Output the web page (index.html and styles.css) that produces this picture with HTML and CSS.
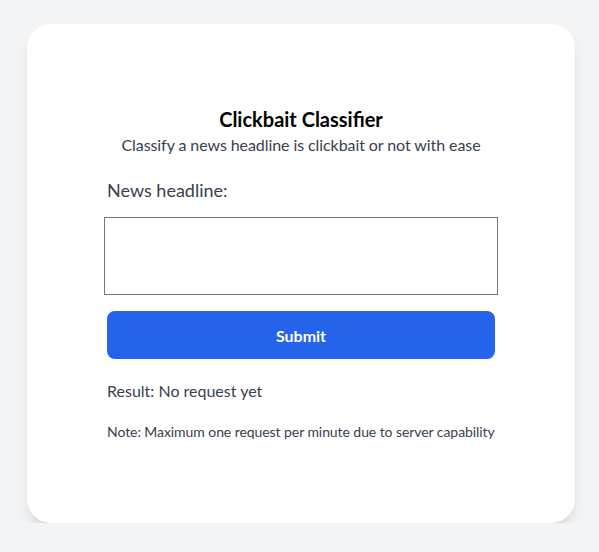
FILE: index.html
```html
<!DOCTYPE html>
<html>
<head>
<meta charset="utf-8">
<link rel="stylesheet" href="styles.css">
</head>
<body>
<main class="card">
  <h1 class="title">Clickbait Classifier</h1>
  <p class="subtitle">Classify a news headline is clickbait or not with ease</p>
  <label class="label" for="headline">News headline:</label>
  <textarea id="headline" class="input"></textarea>
  <button class="submit" type="button">Submit</button>
  <p class="result">Result: No request yet</p>
  <p class="note">Note: Maximum one request per minute due to server capability</p>
</main>
</body>
</html>
```

FILE: styles.css
```css
* { box-sizing: border-box; }
html, body { margin: 0; padding: 0; }
body {
  background: #f3f4f6;
  font-family: Lato, "Noto Sans", sans-serif;
  color: #374151;
  padding: 24px 24px 0 27px;
}
.card {
  width: 548px;
  min-height: 499px;
  background: #fff;
  border-radius: 24px;
  box-shadow: 0 10px 15px -3px rgba(0,0,0,0.1), 0 4px 6px -4px rgba(0,0,0,0.1);
  padding: 81px 80px 80px;
  display: flex;
  flex-direction: column;
}
.card > * { flex-shrink: 0; }
.title {
  margin: 0;
  font-size: 20px;
  line-height: 28px;
  font-weight: 700;
  color: #000;
  text-align: center;
}
.subtitle {
  margin: 0;
  font-size: 16px;
  line-height: 24px;
  letter-spacing: -0.08px;
  text-align: center;
}
.label {
  margin-top: 19px;
  font-size: 18px;
  line-height: 28px;
}
.input {
  margin: 13px -3px 0;
  width: calc(100% + 6px);
  height: 78px;
  border: 1px solid #767676;
  resize: none;
  font-family: inherit;
}
.submit {
  margin-top: 16px;
  height: 48px;
  border: 0;
  border-radius: 8px;
  background: #2563eb;
  color: #fff;
  font-family: inherit;
  font-size: 16px;
  font-weight: 700;
}
.result {
  margin: 20px 0 0;
  font-size: 16px;
  line-height: 24px;
}
.note {
  margin: 19px 0 0;
  font-size: 14px;
  line-height: 20px;
  letter-spacing: -0.07px;
  white-space: nowrap;
}
```
